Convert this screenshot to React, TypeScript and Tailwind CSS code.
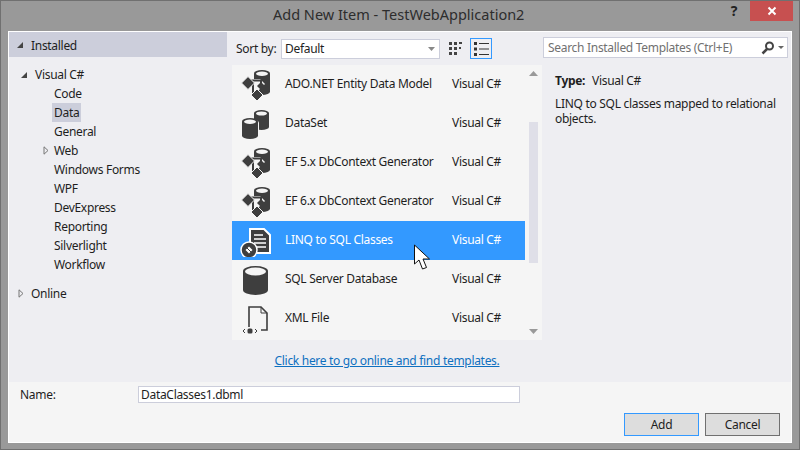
import { ReactNode } from "react"

const templates = [
  { name: "ADO.NET Entity Data Model", icon: "ef" },
  { name: "DataSet", icon: "dataset" },
  { name: "EF 5.x DbContext Generator", icon: "ef" },
  { name: "EF 6.x DbContext Generator", icon: "ef" },
  { name: "LINQ to SQL Classes", icon: "linq" },
  { name: "SQL Server Database", icon: "sql" },
  { name: "XML File", icon: "xml" },
]

const children = ["Code", "Data", "General", "Web", "Windows Forms", "WPF", "DevExpress", "Reporting", "Silverlight", "Workflow"]

function Expanded() {
  return (
    <svg width="8" height="8" viewBox="0 0 8 8">
      <path d="M7 1V7H1Z" fill="#444" />
    </svg>
  )
}

function Collapsed() {
  return (
    <svg width="6" height="9" viewBox="0 0 6 9">
      <path d="M1 .8 5 4.5 1 8.2Z" fill="#eeeef2" stroke="#777" />
    </svg>
  )
}

function Cylinder({ x, y, w, h, fill = "#3e3e3e", top = "#f5f5f5" }: { x: number; y: number; w: number; h: number; fill?: string; top?: string }) {
  const rx = w / 2
  const ry = w / 5
  return (
    <g>
      <path d={`M${x} ${y + ry}V${y + h - ry}A${rx} ${ry} 0 0 0 ${x + w} ${y + h - ry}V${y + ry}A${rx} ${ry} 0 0 0 ${x} ${y + ry}Z`} fill={fill} />
      <ellipse cx={x + rx} cy={y + ry + 0.5} rx={rx - 2} ry={ry - 1} fill={top} />
    </g>
  )
}

function TemplateIcon({ kind }: { kind: string }) {
  if (kind === "ef") {
    return (
      <svg width="32" height="32" viewBox="0 0 32 32" className="shrink-0">
        <Cylinder x={14} y={1} w={16} h={25} />
        {/* connector between the entities */}
        <path d="M11 10H20L25 15 18 22H11Z" fill="#f5f5f5" />
        <path d="M11 11.5H21V18" fill="none" stroke="#3e3e3e" strokeWidth="2" />
        <path d="M13 15V24H17" fill="none" stroke="#3e3e3e" strokeWidth="2" />
        <path d="M17 17 21 13 25 17 21 21Z" fill="#3e3e3e" />
        {/* entities */}
        <path d="M1.5 14 8 7.5 14.5 14 8 20.5Z" fill="#3e3e3e" stroke="#f5f5f5" strokeWidth="1" />
        <path d="M11 26 17 20 23 26 17 32Z" fill="#3e3e3e" stroke="#f5f5f5" strokeWidth="1" />
      </svg>
    )
  }
  if (kind === "dataset") {
    return (
      <svg width="32" height="32" viewBox="0 0 32 32" className="shrink-0">
        <Cylinder x={14} y={2} w={15} h={20} />
        <path d="M1 15C1 10 19 10 19 15V31H1Z" fill="#f5f5f5" />
        <Cylinder x={2} y={10} w={16} h={21} />
      </svg>
    )
  }
  if (kind === "sql") {
    return (
      <svg width="32" height="32" viewBox="0 0 32 32" className="shrink-0">
        <Cylinder x={3} y={2} w={25} h={29} />
      </svg>
    )
  }
  if (kind === "xml") {
    return (
      <svg width="32" height="32" viewBox="0 0 32 32" className="shrink-0">
        <path d="M9 24V4H21L27 10V27H21" fill="none" stroke="#3e3e3e" strokeWidth="1.6" />
        <path d="M21 4V10H27" fill="none" stroke="#3e3e3e" strokeWidth="1" />
        <path d="M5 26 3 28 5 30M15 26 17 28 15 30" fill="none" stroke="#3e3e3e" strokeWidth="1" />
        <rect x="7.5" y="25.5" width="5" height="5" rx="1.5" fill="#3e3e3e" />
      </svg>
    )
  }
  return (
    <svg width="32" height="32" viewBox="0 0 32 32" className="shrink-0">
      <path d="M10 4H24L30 10V28H10Z" fill="#3e3e3e" stroke="#fff" strokeWidth="2" />
      <path d="M14 10H23M14 14H26M14 18H26M14 22H26" stroke="#fff" strokeWidth="1.5" />
      <circle cx="9" cy="25" r="8" fill="#3e3e3e" stroke="#fff" strokeWidth="1.5" />
      <path d="M5.5 25 9 21.5 12.5 25 9 28.5Z" fill="#fff" />
      <path d="M6 22 12 28" stroke="#3e3e3e" strokeWidth="1" />
    </svg>
  )
}

function TreeRow({ label, selected, toggle }: { label: string; selected?: boolean; toggle?: ReactNode }) {
  return (
    <div className="h-[19px] flex items-center">
      <div className="w-[8px] mr-[2px] ml-[33px] flex justify-center">{toggle}</div>
      <div className={`h-[19px] flex items-center px-[2px] ${selected ? "bg-[#cccedb]" : ""}`}>{label}</div>
    </div>
  )
}

export default function App() {
  return (
    <div className="w-[800px] h-[450px] box-border border border-[#707070] bg-[#999999] pl-[7px] pr-[7px] pb-[6px] flex flex-col text-[12px] tracking-[-0.3px] leading-none text-[#1e1e1e] overflow-hidden relative" style={{ fontFamily: '"Noto Sans", sans-serif' }}>
      {/* title bar */}
      <div className="h-[30px] shrink-0 flex relative">
        <div className="absolute left-[265px] top-[6px] text-[14.5px] tracking-normal text-[#2d2d2d] whitespace-nowrap">Add New Item - TestWebApplication2</div>
        <div className="ml-auto flex">
          <div className="w-[30px] h-[20px] flex items-center justify-center font-bold text-[14px] text-[#222] mr-[1px]">?</div>
          <div className="w-[43px] h-[20px] bg-[#c75050] flex items-center justify-center mr-[-1px]">
            <svg width="10" height="10" viewBox="0 0 10 10">
              <path d="M1.5 1.5 8.5 8.5M8.5 1.5 1.5 8.5" stroke="#fff" strokeWidth="2" />
            </svg>
          </div>
        </div>
      </div>

      {/* dialog body */}
      <div className="flex-1 border border-white flex flex-col bg-[#eeeef2]">
        <div className="h-[350px] flex">
          {/* left tree */}
          <div className="w-[218px] shrink-0">
            <div className="h-[25px] bg-[#cccedb] flex items-center pl-[7px]">
              <Expanded />
              <span className="ml-[7px] relative top-[1px]">Installed</span>
            </div>
            <div className="pt-[8px]">
              <div className="h-[19px] flex items-center pl-[11px]">
                <Expanded />
                <span className="ml-[7px]">Visual C#</span>
              </div>
              {children.map((c) => (
                <TreeRow key={c} label={c} selected={c === "Data"} toggle={c === "Web" ? <Collapsed /> : undefined} />
              ))}
              <div className="h-[19px] mt-[10px] flex items-center pl-[9px]">
                <Collapsed />
                <span className="ml-[7px]">Online</span>
              </div>
            </div>
          </div>

          {/* templates */}
          <div className="w-[310px] ml-[5px] shrink-0 flex flex-col">
            <div className="h-[33px] flex items-center pl-[4px]">
              <span className="w-[45px]">Sort by:</span>
              <div className="w-[159px] h-[20px] box-border bg-white border border-[#cccedb] flex items-center pl-[3px] pr-[4px]">
                <span>Default</span>
                <svg width="7" height="4" viewBox="0 0 7 4" className="ml-auto">
                  <path d="M0 0H7L3.5 4Z" fill="#888" />
                </svg>
              </div>
              <svg width="14" height="14" viewBox="0 0 14 14" className="ml-[9px]" fill="#444">
                <path d="M0 0h3v3H0zM5 0h3v3H5zM10 0h3v2h-3zM0 5h3v3H0zM5 5h3v3H5zM10 5h2v2h-2zM0 10h3v3H0zM5 10h3v3H5z" />
              </svg>
              <div className="w-[22px] h-[21px] box-border ml-[7px] border border-[#3399ff] flex items-center justify-center">
                <svg width="15" height="14" viewBox="0 0 15 14">
                  <path d="M0 0h3v3H0zM0 5.5h3v3H0zM0 11h3v3H0z" fill="#333" />
                  <path d="M5 1.5h10M5 7h10M5 12.5h10" stroke="#333" strokeWidth="1" />
                </svg>
              </div>
            </div>
            <div className="h-[275px] bg-[#f5f5f5] flex">
              <div className="w-[293px]">
                {templates.map((t) => (
                  <div key={t.name} className={`h-[39px] flex items-center pl-[8px] ${t.name.startsWith("LINQ") ? "bg-[#3399ff] text-white" : ""}`}>
                    <TemplateIcon kind={t.icon} />
                    <span className="ml-[13px] w-[167px] whitespace-nowrap pb-[2px]">{t.name}</span>
                    <span className="pb-[2px]">Visual C#</span>
                  </div>
                ))}
              </div>
              <div className="w-[17px] flex flex-col items-center">
                <svg width="9" height="5" viewBox="0 0 9 5" className="mt-[6px]">
                  <path d="M0 5H9L4.5 0Z" fill="#999" />
                </svg>
                <div className="w-[9px] h-[141px] bg-[#dfdfe8] mt-[46px]" />
                <svg width="9" height="5" viewBox="0 0 9 5" className="mt-auto mb-[6px]">
                  <path d="M0 0H9L4.5 5Z" fill="#999" />
                </svg>
              </div>
            </div>
            <div className="flex-1 flex items-center justify-center">
              <span className="text-[#0e70c0] underline">Click here to go online and find templates.</span>
            </div>
          </div>

          {/* right pane */}
          <div className="flex-1 pl-[1px] pr-[3px] pt-[5px]">
            <div className="h-[21px] box-border bg-white border border-[#cccedb] flex items-center pl-[4px] pr-[3px] text-[#717171]">
              <span>Search Installed Templates (Ctrl+E)</span>
              <svg width="14" height="14" viewBox="0 0 14 14" className="ml-auto">
                <circle cx="8.5" cy="5" r="3.5" fill="none" stroke="#444" strokeWidth="2" />
                <path d="M6 8 1.5 12.5" stroke="#444" strokeWidth="2.5" />
              </svg>
              <svg width="6" height="3" viewBox="0 0 6 3" className="ml-[3px]">
                <path d="M0 0H6L3 3Z" fill="#666" />
              </svg>
            </div>
            <div className="pl-[12px] pt-[15px]">
              <div className="h-[16px] flex items-center">
                <span className="font-bold w-[37px]">Type:</span>
                <span>Visual C#</span>
              </div>
              <p className="mt-[7px] w-[232px] leading-[15px]">LINQ to SQL classes mapped to relational objects.</p>
            </div>
          </div>
        </div>

        {/* footer */}
        <div className="flex-1 bg-[#f5f5f5] flex flex-col pt-[4px]">
          <div className="h-[17px] flex items-center pl-[11px]">
            <span className="w-[118px]">Name:</span>
            <div className="w-[382px] h-[17px] box-border bg-white border border-[#cccedb] flex items-center pl-[2px]">DataClasses1.dbml</div>
          </div>
          <div className="flex justify-end gap-[6px] pr-[11px] mt-[10px]">
            <button className="w-[75px] h-[23px] box-border bg-[#dddddd] border border-[#3399ff]">Add</button>
            <button className="w-[75px] h-[23px] box-border bg-[#dddddd] border border-[#707070]">Cancel</button>
          </div>
        </div>
      </div>

      {/* mouse pointer */}
      <svg width="18" height="28" viewBox="0 0 18 28" className="absolute left-[412px] top-[243px]">
        <path d="M1.5 1V20L6 16 9.5 25 13.5 23.5 10 15 16.5 15Z" fill="#fff" stroke="#111" strokeWidth="1" />
      </svg>
    </div>
  )
}
